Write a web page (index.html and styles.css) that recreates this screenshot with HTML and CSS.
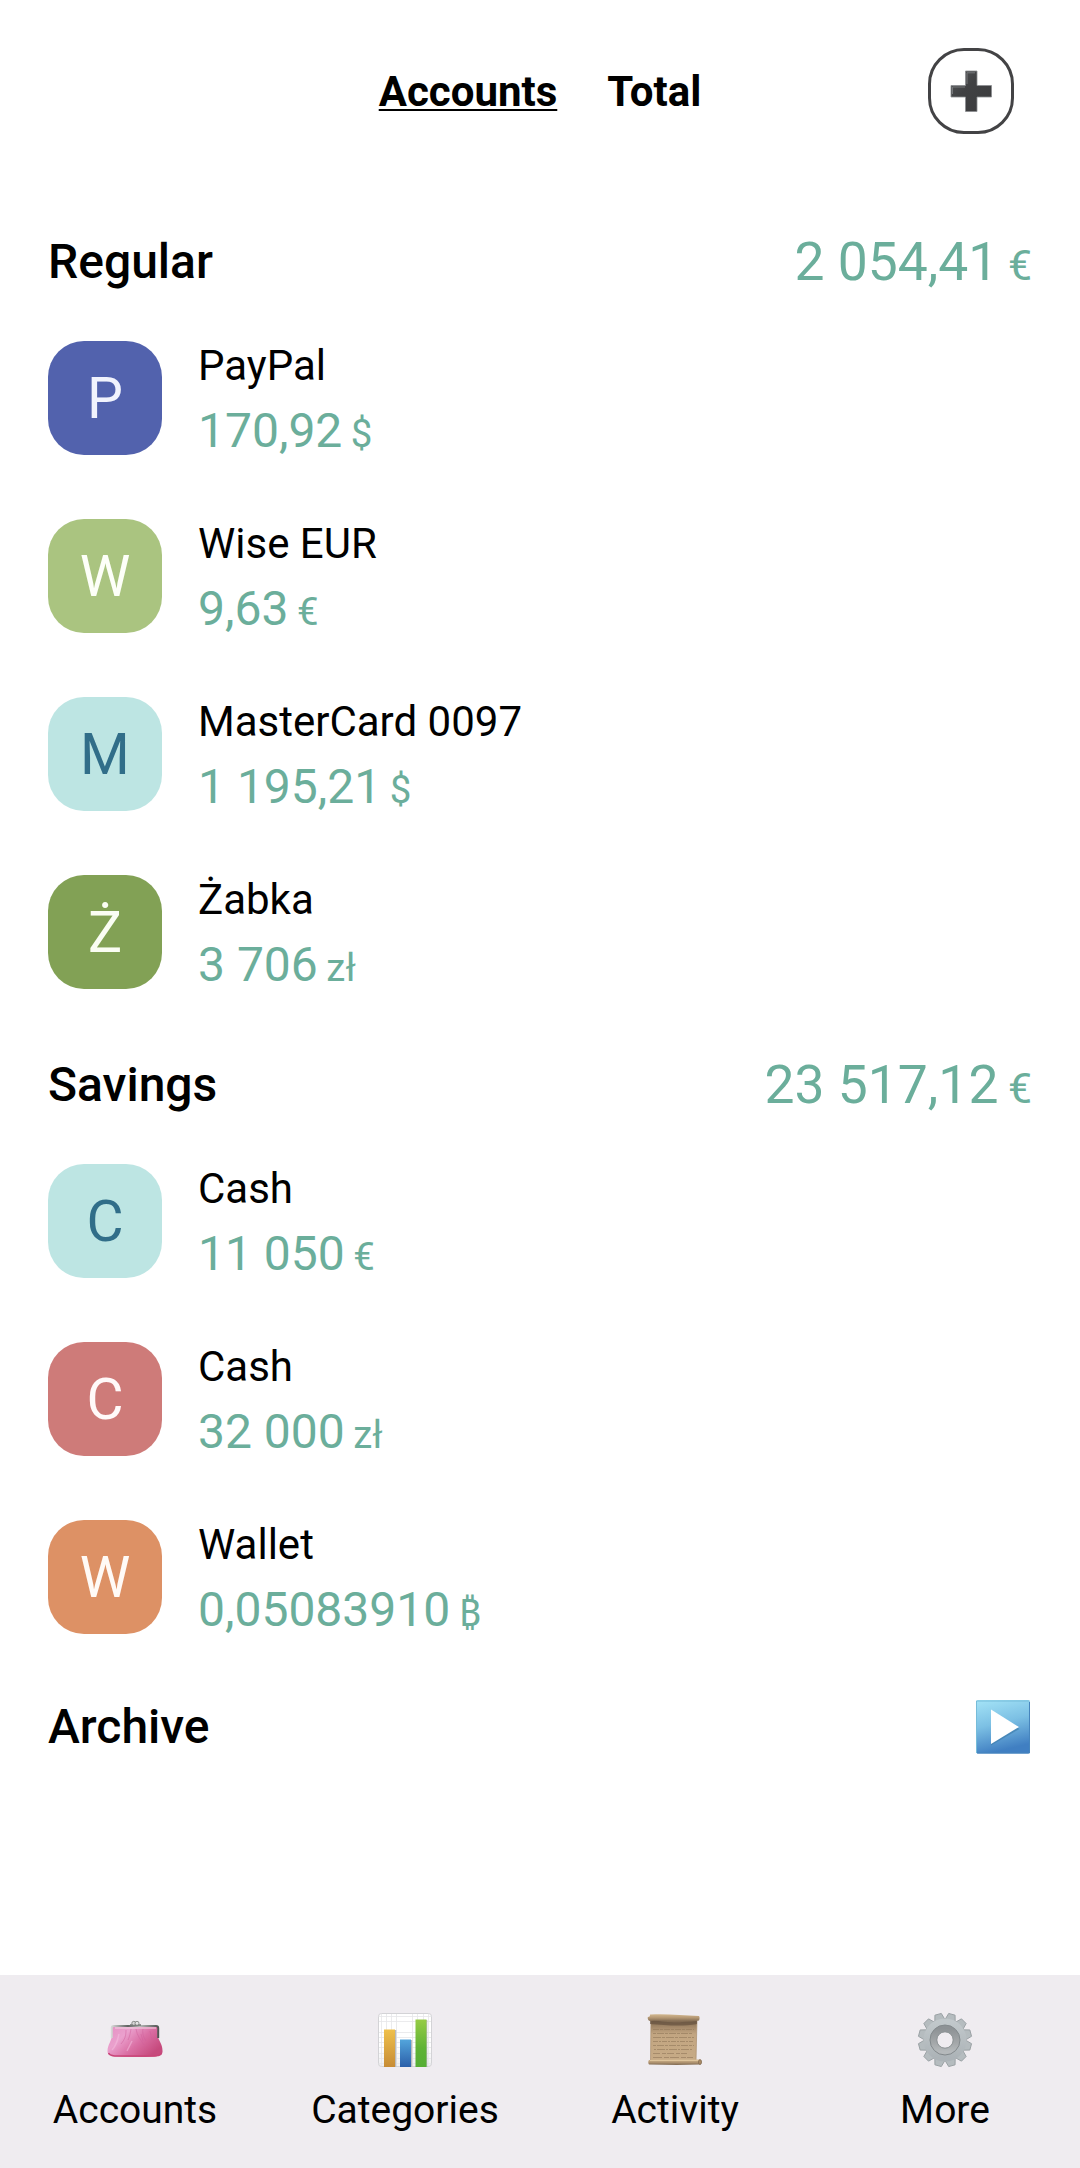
FILE: index.html
```html
<!DOCTYPE html>
<html lang="en">
<head>
<meta charset="utf-8">
<title>Accounts</title>
<link rel="stylesheet" href="styles.css">
</head>
<body>
<div class="app">
  <header class="topbar">
    <nav class="tabs">
      <a class="tab tab-active">Accounts</a>
      <a class="tab">Total</a>
    </nav>
    <button class="add" aria-label="Add account">
      <svg width="42" height="42" viewBox="0 0 42 42">
        <defs>
          <linearGradient id="plusFill" x1="0" y1="0" x2="1" y2="1"><stop offset="0" stop-color="#555658"/><stop offset=".4" stop-color="#404143"/><stop offset="1" stop-color="#3b3b3d"/></linearGradient>
        </defs>
        <path d="M15.500 1h11.500v14.500h14.500v11.500H27v14.500H15.500V27H1V15.500h14.500z" fill="url(#plusFill)" stroke="#8b8d90" stroke-width=".8"/>
        <path d="M17 14V2.800h8M2.500 24v-7h12.500" fill="none" stroke="#76787b" stroke-width="1"/>
      </svg>
    </button>
  </header>

  <main class="content">
    <section>
      <div class="section-head">
        <h2>Regular</h2>
        <div class="sum">2 054,41<span class="cur"> €</span></div>
      </div>
      <div class="row"><div class="avatar indigo">P</div><div class="info"><div class="name">PayPal</div><div class="amount">170,92<span class="cur"> $</span></div></div></div>
      <div class="row"><div class="avatar lime">W</div><div class="info"><div class="name">Wise EUR</div><div class="amount">9,63<span class="cur"> €</span></div></div></div>
      <div class="row"><div class="avatar aqua">M</div><div class="info"><div class="name">MasterCard 0097</div><div class="amount">1 195,21<span class="cur"> $</span></div></div></div>
      <div class="row"><div class="avatar green">Ż</div><div class="info"><div class="name">Żabka</div><div class="amount">3 706<span class="cur"> zł</span></div></div></div>
    </section>
    <section>
      <div class="section-head">
        <h2>Savings</h2>
        <div class="sum">23 517,12<span class="cur"> €</span></div>
      </div>
      <div class="row"><div class="avatar aqua">C</div><div class="info"><div class="name">Cash</div><div class="amount">11 050<span class="cur"> €</span></div></div></div>
      <div class="row"><div class="avatar red">C</div><div class="info"><div class="name">Cash</div><div class="amount">32 000<span class="cur"> zł</span></div></div></div>
      <div class="row"><div class="avatar orange">W</div><div class="info"><div class="name">Wallet</div><div class="amount">0,05083910<span class="cur"> ₿</span></div></div></div>
    </section>
    <section>
      <div class="section-head archive-head">
        <h2>Archive</h2>
        <svg class="play" width="56" height="56" viewBox="0 0 56 56">
          <defs>
            <linearGradient id="playFill" x1="0" y1="0" x2=".25" y2="1"><stop offset="0" stop-color="#a5e4f7"/><stop offset=".5" stop-color="#7cc0e4"/><stop offset="1" stop-color="#407fc2"/></linearGradient>
          </defs>
          <rect x="1" y="1" width="54" height="53.500" rx="2" fill="url(#playFill)"/>
          <path d="M1.500 54V2h53" fill="none" stroke="#76bcd9" stroke-width="1"/>
          <path d="M2 54h52.500V3" fill="none" stroke="#4685bd" stroke-width="1"/>
          <path d="M16 12.500v34L44.500 30z" fill="#3e7cab" opacity=".65"/>
          <path d="M16 10.500v34.500L44 28z" fill="#fff"/>
        </svg>
      </div>
    </section>
  </main>

  <footer class="bottom">
    <a class="item">
      <svg width="56" height="56" viewBox="0 0 56 56">
        <defs>
          <linearGradient id="purseFill" x1="0" y1="0" x2="1" y2=".6"><stop offset="0" stop-color="#e58fc2"/><stop offset=".35" stop-color="#eaa0cd"/><stop offset=".65" stop-color="#da6fa4"/><stop offset="1" stop-color="#c64a7d"/></linearGradient>
          <linearGradient id="purseFrame" x1="0" y1="0" x2="1" y2="0"><stop offset="0" stop-color="#d5d6d5"/><stop offset=".35" stop-color="#5e6260"/><stop offset=".6" stop-color="#b9bbb9"/><stop offset="1" stop-color="#525654"/></linearGradient>
        </defs>
        <path d="M5 14h46v10c0 4 5 8 4.500 16-.5 4-4 4.500-8 4.500-12 .8-27 .8-40 0C3.500 44.500 .5 43 .5 39 .5 33 5 28 5 23z" fill="url(#purseFill)"/>
        <path d="M1.500 41c2 4 9 2.800 27 3 16 0 24 .8 26-3" fill="none" stroke="#c94578" stroke-width="1.500"/>
        <path d="M19 18c0 6-1 9-5 14M24 17c-1 6-2 9-3 11M29 17c1 7 5 11 8 16M36 17c-1 5 1 9 3 12M34 22l2 7M43 19l2 9" fill="none" stroke="#cf609c" stroke-width="1" opacity=".5"/>
        <path d="M12 22c-2 10-5 14-7 16M25 29l-5 10" fill="none" stroke="#f5bfdf" stroke-width="1.500" opacity=".5"/>
        <path d="M4.800 26V15.500Q5 14 7 14h42q2.200 0 2.200 2v10" fill="none" stroke="url(#purseFrame)" stroke-width="2"/>
        <path d="M8 16h41" stroke="#efd6e1" stroke-width="1"/>
        <path d="M23 13h11" stroke="#737674" stroke-width="1.500"/>
        <circle cx="26.800" cy="11.300" r="2" fill="#d8d8d8" stroke="#767876" stroke-width=".8"/><circle cx="30" cy="11.300" r="2" fill="#e5e5e5" stroke="#767876" stroke-width=".8"/>
      </svg>
      <span>Accounts</span>
    </a>
    <a class="item">
      <svg width="56" height="56" viewBox="0 0 56 56">
        <defs>
          <linearGradient id="paper" x1="0" y1="0" x2="0" y2="1"><stop offset=".6" stop-color="#fff"/><stop offset="1" stop-color="#efeff0"/></linearGradient>
          <linearGradient id="barGold" x1="0" y1="0" x2="0" y2="1"><stop offset="0" stop-color="#efc04b"/><stop offset="1" stop-color="#c78c35"/></linearGradient>
          <linearGradient id="barBlue" x1="0" y1="0" x2="0" y2="1"><stop offset="0" stop-color="#53a5dc"/><stop offset="1" stop-color="#2b5fa9"/></linearGradient>
          <linearGradient id="barGreen" x1="0" y1="0" x2="0" y2="1"><stop offset="0" stop-color="#96cc45"/><stop offset=".6" stop-color="#5fb335"/><stop offset="1" stop-color="#55ae34"/></linearGradient>
        </defs>
        <rect x="1.500" y="1.500" width="53" height="53" rx="3" fill="url(#paper)" stroke="#d3d3d6"/>
        <path d="M4.500 2v52M9.500 2v52M14.500 2v52M19.500 2v52M35.500 2v52M40.500 2v52M46.500 2v52M51.500 2v52M2 4.500h52M2 9.500h52M2 20.500h52M2 25.500h52M2 30.500h52M2 35.500h52M2 41.500h52M2 46.500h52M2 51.500h52" stroke="#e6e6e8" stroke-width=".8"/>
        <path d="M18.500 18v37M34.500 28v27M49.500 8v47" stroke="#b9babd" stroke-width="1.500"/>
        <rect x="7" y="17.500" width="11" height="37.500" fill="url(#barGold)"/>
        <rect x="23" y="27.500" width="11" height="27.500" fill="url(#barBlue)"/>
        <rect x="38.500" y="7.500" width="11" height="47.500" fill="url(#barGreen)"/>
      </svg>
      <span>Categories</span>
    </a>
    <a class="item">
      <svg width="56" height="56" viewBox="0 0 56 56">
        <defs>
          <linearGradient id="sheet" x1="0" y1="0" x2="0" y2="1"><stop offset="0" stop-color="#75604a"/><stop offset=".17" stop-color="#a08566"/><stop offset=".36" stop-color="#c2a581"/><stop offset="1" stop-color="#c7ab86"/></linearGradient>
          <linearGradient id="roll" x1="0" y1="0" x2="0" y2="1"><stop offset="0" stop-color="#d3b991"/><stop offset=".5" stop-color="#b59874"/><stop offset="1" stop-color="#806a52"/></linearGradient>
        </defs>
        <path d="M4 7h46l-1 42H3.500z" fill="url(#sheet)" stroke="#a98e6d" stroke-width=".7"/>
        <path d="M3 7c16 5 32 3 47 2v3c-16 3-32 1-47 0z" fill="#65513e" opacity=".7"/>
        <path d="M3 2.500c15-1 32 .5 49 1.500.8 1 .8 3 0 4.500-15 2-34-.5-49 .5C1 8.500.5 7 .8 5 3 5 3 4 3 2.500z" fill="url(#roll)"/>
        <g stroke="#92785a" stroke-width="1" opacity=".6" fill="none">
          <path d="M6 17.500h41" stroke-dasharray="6 1 3 1"/><path d="M6 21.500h40" stroke-dasharray="3 1 7 1"/><path d="M6 25.500h41" stroke-dasharray="8 1 3 1"/><path d="M6 29.500h40" stroke-dasharray="5 1 2 1"/><path d="M6 33.500h41" stroke-dasharray="3 1 7 1"/><path d="M7 37.500h39" stroke-dasharray="2 1 8 1"/><path d="M6 41.500h34" stroke-dasharray="7 2 4 1"/><path d="M6 45.500h40" stroke-dasharray="9 2 5 1"/>
        </g>
        <path d="M2 48c16-.5 34-.8 51-.5 2 .5 2 4 .5 5-17 .7-35 .5-51.500 0-1-1-1-3.500 0-4.500z" fill="url(#roll)"/>
        <path d="M3 48.500h49" stroke="#dfc59c" stroke-width="1"/>
        <ellipse cx="53" cy="50" rx="1.500" ry="2.500" fill="#ad8d66" stroke="#725d46" stroke-width=".6"/>
      </svg>
      <span>Activity</span>
    </a>
    <a class="item">
      <svg width="56" height="56" viewBox="0 0 56 56">
        <defs>
          <linearGradient id="steel" x1="0" y1="0" x2="0" y2="1"><stop offset="0" stop-color="#c1c8cb"/><stop offset="1" stop-color="#acb3b7"/></linearGradient>
          <linearGradient id="hub" x1="0" y1="0" x2="0" y2="1"><stop offset="0" stop-color="#8d9295"/><stop offset=".6" stop-color="#a2a6a8"/><stop offset="1" stop-color="#b5b9bb"/></linearGradient>
          <path id="tooth" d="M22.700 8.500L24.700 1.400h6.600L33.300 8.500z"/>
        </defs>
        <g fill="#b5bcbf" stroke="#989fa3" stroke-width=".9" stroke-linejoin="round">
          <use href="#tooth" transform="rotate(15 28 28)"/><use href="#tooth" transform="rotate(45 28 28)"/><use href="#tooth" transform="rotate(75 28 28)"/><use href="#tooth" transform="rotate(105 28 28)"/><use href="#tooth" transform="rotate(135 28 28)"/><use href="#tooth" transform="rotate(165 28 28)"/><use href="#tooth" transform="rotate(195 28 28)"/><use href="#tooth" transform="rotate(225 28 28)"/><use href="#tooth" transform="rotate(255 28 28)"/><use href="#tooth" transform="rotate(285 28 28)"/><use href="#tooth" transform="rotate(315 28 28)"/><use href="#tooth" transform="rotate(345 28 28)"/>
        </g>
        <circle cx="28" cy="28" r="17.800" fill="none" stroke="url(#steel)" stroke-width="7.500"/>
        <circle cx="28" cy="28" r="11.500" fill="none" stroke="url(#hub)" stroke-width="7"/>
        <circle cx="28" cy="28" r="15" fill="none" stroke="#83898c" stroke-width="1"/>
        <circle cx="28" cy="28" r="8.200" fill="none" stroke="#8d9395" stroke-width="1"/>
      </svg>
      <span>More</span>
    </a>
  </footer>
</div>
</body>
</html>
```
FILE: styles.css
```css
* {
  box-sizing: border-box;
}

body {
  margin: 0;
  background: #fff;
  color: #000;
  font-family: Roboto, "Noto Sans", sans-serif;
}

.app {
  display: flex;
  flex-direction: column;
  height: 2168px;
}

.topbar {
  display: grid;
  grid-template-columns: 1fr auto 1fr;
  align-items: center;
  height: 198px;
  padding: 0 66px 16px;
}

.tabs {
  grid-column: 2;
  display: flex;
  gap: 50px;
  padding-top: 2px;
  font-size: 42px;
  font-weight: 700;
  line-height: 50px;
}

.tab-active {
  text-decoration: underline;
  text-decoration-thickness: 2px;
  text-underline-offset: 3px;
}

.add {
  justify-self: end;
  display: flex;
  align-items: center;
  justify-content: center;
  width: 86px;
  height: 86px;
  padding: 0;
  border: 3px solid #434345;
  border-radius: 36px;
  background: #fff;
}

.content {
  flex: 1;
  padding: 0 48px;
}

.section-head {
  display: flex;
  align-items: center;
  justify-content: space-between;
  height: 111px;
  padding-top: 16px;
}

.archive-head {
  height: 108px;
  padding: 13px 1px 0 0;
}

.section-head h2 {
  margin: 0;
  font-size: 48px;
  font-weight: 500;
  line-height: 56px;
}

.sum {
  color: #6bae9b;
  font-size: 53.4px;
  line-height: 64px;
}

.cur {
  margin-left: -1px;
  font-size: 0.8em;
  line-height: 1;
  white-space: pre;
}

.row {
  display: flex;
  align-items: center;
  gap: 36px;
  height: 178px;
}

.avatar {
  display: flex;
  align-items: center;
  justify-content: center;
  width: 114px;
  height: 114px;
  border-radius: 36px;
  color: #fff;
  font-size: 57px;
}

.indigo { background: #5262ad; color: #f1f3fd; }
.lime { background: #aac480; color: #fdfff8; }
.aqua { background: #bde5e3; color: #316e89; }
.green { background: #82a155; color: #fafdf3; }
.red { background: #ce7b79; color: #fff9f9; }
.orange { background: #dd9165; color: #fffaf6; }

.name {
  font-size: 42px;
  line-height: 65px;
}

.amount {
  color: #6bae9b;
  font-size: 48px;
  line-height: 65px;
}

.bottom {
  display: grid;
  grid-template-columns: repeat(4, 1fr);
  height: 193px;
  padding-top: 37px;
  background: #efecf0;
}

.item {
  display: flex;
  flex-direction: column;
  align-items: center;
  gap: 18px;
  font-size: 39px;
  line-height: 48px;
}

.item svg {
  display: block;
}
```
